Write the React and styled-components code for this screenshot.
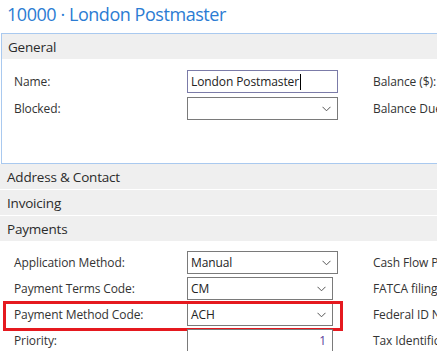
import React from "react";
import styled, { createGlobalStyle } from "styled-components";

const Global = createGlobalStyle`
  html, body { margin: 0; padding: 0; background: #fff; }
  body { width: 437px; height: 351px; overflow: hidden; font-family: "Open Sans", "Noto Sans", sans-serif; }
`;

const Page = styled.div`
  width: 437px;
  height: 351px;
  overflow: hidden;
  background: #fff;
`;

const Title = styled.h1`
  margin: 0;
  height: 32px;
  padding: 1px 0 0 7px;
  box-sizing: border-box;
  font-family: "Open Sans", sans-serif;
  font-weight: 400;
  font-size: 18px;
  line-height: 26px;
  color: #2b7cd3;
  white-space: nowrap;
  letter-spacing: -0.45px;
`;

const Card = styled.section`
  margin: 1px 0 0 1px;
  border: 1px solid #a9c9ef;
  border-right: none;
`;

const Header = styled.div`
  height: 25px;
  background: #efefef;
  display: flex;
  align-items: center;
  padding-left: ${(p) => (p.$inCard ? 6 : 7)}px;
  font-size: 13.5px;
  letter-spacing: -0.2px;
  color: #2b2b2b;
  white-space: nowrap;
`;

const Body = styled.div`
  height: ${(p) => p.$h}px;
  box-sizing: border-box;
  padding-top: ${(p) => p.$pt}px;
  padding-left: ${(p) => p.$pl}px;
  display: flex;
  flex-direction: column;
  gap: ${(p) => p.$gap}px;
`;

const Row = styled.div`
  position: relative;
  display: flex;
  align-items: center;
  height: 23px;
  &::after {
    content: "";
    display: ${(p) => (p.$highlight ? "block" : "none")};
    position: absolute;
    left: -11px;
    top: -2px;
    width: 340px;
    height: 30px;
    box-sizing: border-box;
    border: 3px solid #e5191f;
    pointer-events: none;
  }
`;

const Label = styled.div`
  width: 173px;
  flex: none;
  font-size: 12px;
  letter-spacing: -0.1px;
  color: #333;
  white-space: nowrap;
`;

const Field = styled.div`
  width: ${(p) => p.$w}px;
  height: 23px;
  flex: none;
  box-sizing: border-box;
  border: 1px solid ${(p) => (p.$focus ? "#7b7ba8" : "#7a7a7a")};
  display: flex;
  align-items: center;
  padding: 0 6px 0 3px;
  font-size: 12px;
  letter-spacing: -0.1px;
  color: #222;
  justify-content: ${(p) => (p.$right ? "flex-end" : "space-between")};
  background: #fff;
`;

const Value = styled.span`
  white-space: nowrap;
  color: ${(p) => p.$color || "#222"};
`;

const Caret = styled.span`
  display: inline-block;
  width: 1px;
  height: 16px;
  background: #000;
  vertical-align: middle;
  margin-left: 1px;
`;

const SideLabel = styled.div`
  margin-left: ${(p) => p.$ml || 35}px;
  font-size: 12px;
  letter-spacing: -0.1px;
  color: #333;
  white-space: nowrap;
`;

const Chevron = () => (
  <svg width="9" height="6" viewBox="0 0 9 6" style={{ flex: "none" }}>
    <path d="M0.5 0.8 L4.5 4.8 L8.5 0.8" fill="none" stroke="#555" strokeWidth="1" />
  </svg>
);

const Sep = styled.div`
  height: 1px;
  background: #fff;
`;

export default function App() {
  return (
    <Page>
      <Global />
      <Title>10000 · London Postmaster</Title>
      <Card>
        <Header $inCard>General</Header>
        <Body $h={104} $pt={11} $pl={12} $gap={4}>
          <Row>
            <Label>Name:</Label>
            <Field $w={151} $focus>
              <Value>
                London Postmaster<Caret />
              </Value>
            </Field>
            <SideLabel>Balance ($):</SideLabel>
          </Row>
          <Row>
            <Label>Blocked:</Label>
            <Field $w={151}>
              <Value />
              <Chevron />
            </Field>
            <SideLabel>Balance Due</SideLabel>
          </Row>
        </Body>
      </Card>
      <Header>Address &amp; Contact</Header>
      <Sep />
      <Header>Invoicing</Header>
      <Sep />
      <Header>Payments</Header>
      <Body $h={120} $pt={10} $pl={14} $gap={3}>
        <Row>
          <Label>Application Method:</Label>
          <Field $w={151}>
            <Value>Manual</Value>
            <Chevron />
          </Field>
          <SideLabel>Cash Flow P</SideLabel>
        </Row>
        <Row>
          <Label>Payment Terms Code:</Label>
          <Field $w={146}>
            <Value>CM</Value>
            <Chevron />
          </Field>
          <SideLabel $ml={40}>FATCA filing</SideLabel>
        </Row>
        <Row $highlight>
          <Label>Payment Method Code:</Label>
          <Field $w={146}>
            <Value>ACH</Value>
            <Chevron />
          </Field>
          <SideLabel $ml={40}>Federal ID N</SideLabel>
        </Row>
        <Row>
          <Label>Priority:</Label>
          <Field $w={146} $right>
            <Value $color="#5b3b9b">1</Value>
          </Field>
          <SideLabel $ml={40}>Tax Identific.</SideLabel>
        </Row>
      </Body>
    </Page>
  );
}
